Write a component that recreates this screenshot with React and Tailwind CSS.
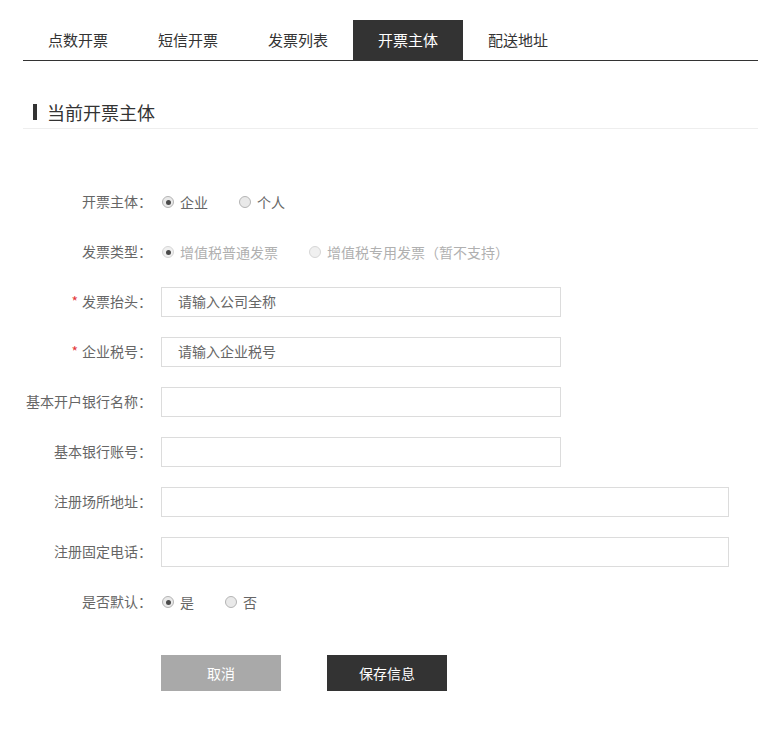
import React from 'react';

const font = { fontFamily: '"Microsoft YaHei", "Noto Sans CJK SC", sans-serif' };

const tabs = ['点数开票', '短信开票', '发票列表', '开票主体', '配送地址'];

const Radio = ({ checked, disabled, label }) => (
  <label className="flex items-center mr-[30px]">
    <span
      className={`ml-[1px] w-3 h-3 rounded-full border flex items-center justify-center ${
        disabled ? 'border-[#d6d6d6] bg-[#f0f0f0]' : 'border-[#b4b4b4] bg-[#e9e9e9]'
      }`}
    >
      {checked && <span className="w-[5px] h-[5px] rounded-full bg-[#4a4a4a]" />}
    </span>
    <span className={`ml-[6px] text-[14px] ${disabled ? 'text-[#b0b0b0]' : 'text-[#666]'}`}>{label}</span>
  </label>
);

const Row = ({ label, required, children }) => (
  <div className="flex items-center h-[30px] mb-5">
    <div className="w-[129px] text-right text-[14px] text-[#666] whitespace-nowrap -mt-[2px]">
      {required && <span className="text-[#e4393c] mr-1">*</span>}
      {label}：
    </div>
    <div className="ml-[9px] flex items-center h-full">{children}</div>
  </div>
);

const Field = ({ wide, placeholder }) => (
  <div
    className={`${wide ? 'w-[568px]' : 'w-[400px]'} h-[30px] border border-[#dcdcdc] pl-4 pb-[2px] flex items-center text-[14px] text-[#666]`}
  >
    {placeholder}
  </div>
);

export default function App() {
  return (
    <div className="w-[758px] min-h-[742px] bg-white pl-[23px] pt-5" style={font}>
      <div className="flex h-[41px] border-b border-[#333]">
        {tabs.map((t) => (
          <div
            key={t}
            className={`w-[110px] h-10 flex items-center justify-center text-[15px] ${
              t === '开票主体' ? 'bg-[#333] text-white' : 'text-[#333]'
            }`}
          >
            {t}
          </div>
        ))}
      </div>

      <div className="mt-[39px] pb-1 border-b border-[#eee] flex items-center h-[29px]">
        <span className="ml-[10px] w-1 h-4 bg-[#333]" />
        <span className="ml-[10px] text-[18px] text-[#333] leading-6">当前开票主体</span>
      </div>

      <div className="mt-[58px]">
        <Row label="开票主体">
          <Radio checked label="企业" />
          <Radio label="个人" />
        </Row>
        <Row label="发票类型">
          <Radio checked disabled label="增值税普通发票" />
          <Radio disabled label="增值税专用发票（暂不支持）" />
        </Row>
        <Row label="发票抬头" required>
          <Field placeholder="请输入公司全称" />
        </Row>
        <Row label="企业税号" required>
          <Field placeholder="请输入企业税号" />
        </Row>
        <Row label="基本开户银行名称">
          <Field />
        </Row>
        <Row label="基本银行账号">
          <Field />
        </Row>
        <Row label="注册场所地址">
          <Field wide />
        </Row>
        <Row label="注册固定电话">
          <Field wide />
        </Row>
        <Row label="是否默认">
          <Radio checked label="是" />
          <Radio label="否" />
        </Row>
      </div>

      <div className="flex mt-[38px] ml-[138px] gap-[46px]">
        <button className="w-[120px] h-9 bg-[#a9a9a9] text-white text-[14px]">取消</button>
        <button className="w-[120px] h-9 bg-[#333] text-white text-[14px]">保存信息</button>
      </div>
    </div>
  );
}
